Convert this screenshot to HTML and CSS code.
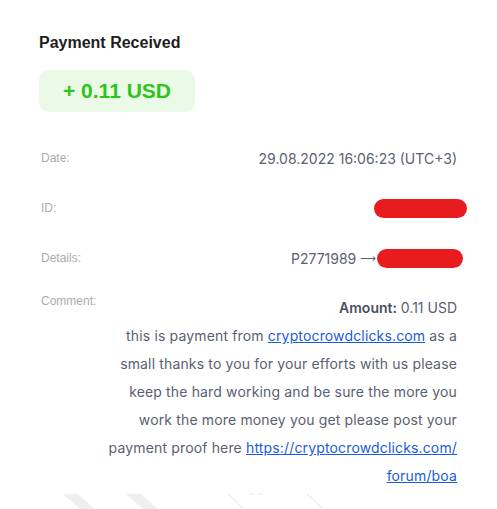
FILE: index.html
```html
<!DOCTYPE html>
<html>
<head>
<meta charset="utf-8">
<link rel="stylesheet" href="styles.css">
</head>
<body>
<div class="card">
  <h1 class="title">Payment Received</h1>
  <div class="badge">+ 0.11 USD</div>
  <div class="rows">
    <div class="row">
      <span class="label">Date:</span>
      <span class="value">29.08.2022 16:06:23 (UTC+3)</span>
    </div>
    <div class="row">
      <span class="label">ID:</span>
      <span class="value"><span class="redact redact-id"></span></span>
    </div>
    <div class="row">
      <span class="label">Details:</span>
      <span class="value">P2771989&nbsp;<span class="arrow">⟶</span><span class="redact redact-details"></span></span>
    </div>
    <div class="row row-comment">
      <span class="label">Comment:</span>
      <div class="comment">
        <div class="amount"><b>Amount:</b> 0.11 USD</div>
        <div class="message">this is payment from <a href="#">cryptocrowdclicks.com</a> as a<br>small thanks to you for your efforts with us please<br>keep the hard working and be sure the more you<br>work the more money you get please post your<br>payment proof here <a href="#">https://cryptocrowdclicks.com/<br>forum/boa</a></div>
      </div>
    </div>
  </div>
  <svg class="watermark" width="497" height="29" viewBox="0 0 497 29">
    <polygon points="63,14 78,14 95,29 80,29" fill="#efefef"/>
    <polygon points="126,14 141,14 158,29 143,29" fill="#efefef"/>
    <line x1="228" y1="14" x2="243" y2="28" stroke="#e2e2e2" stroke-width="1"/>
    <line x1="307" y1="14" x2="322" y2="28" stroke="#e2e2e2" stroke-width="1"/>
    <line x1="249" y1="14" x2="254" y2="14" stroke="#e6e6e6" stroke-width="1"/>
    <line x1="258" y1="14" x2="263" y2="14" stroke="#e6e6e6" stroke-width="1"/>
  </svg>
</div>
</body>
</html>
```

FILE: styles.css
```css
* { box-sizing: border-box; }
html, body { margin: 0; padding: 0; background: #fff; }
body { width: 497px; height: 509px; overflow: hidden; position: relative; }

.card {
  padding: 33px 40px 0 39px;
  font-family: "Liberation Sans", Arial, sans-serif;
}

.title {
  margin: 0;
  font-size: 16px;
  line-height: 20px;
  font-weight: bold;
  color: #1e1e1e;
}

.badge {
  margin-top: 17px;
  width: 156px;
  height: 42px;
  border-radius: 10px;
  background: #eafae6;
  color: #2ec41b;
  font-size: 21px;
  font-weight: bold;
  display: flex;
  align-items: center;
  justify-content: center;
}

.rows {
  margin-top: 21px;
  padding-left: 2px;
}

.row {
  height: 50px;
  display: flex;
  align-items: center;
  justify-content: space-between;
}

.label {
  font-size: 12px;
  line-height: 14px;
  color: #ababab;
}

.value {
  font-family: Inter, "Noto Sans", sans-serif;
  font-size: 14px;
  color: #5a6172;
  display: flex;
  align-items: center;
  white-space: nowrap;
}

.arrow {
  font-family: "DejaVu Sans", sans-serif;
  font-size: 11px;
}

.redact {
  display: inline-block;
  height: 19px;
  border-radius: 10px;
  background: #e81c1f;
}
.redact-id { width: 93px; margin-right: -10px; }
.redact-details { width: 86px; margin-left: 1px; margin-right: -6px; }

.row-comment {
  height: auto;
  margin-top: 11px;
  align-items: flex-start;
}

.comment {
  font-family: Inter, "Noto Sans", sans-serif;
  font-size: 14px;
  line-height: 28px;
  letter-spacing: 0.15px;
  color: #5a6172;
  text-align: right;
}
.amount { letter-spacing: 0; }
.amount b { color: #4a5061; font-weight: 600; }
.comment a { color: #1a5ce0; text-decoration: underline; }

.watermark {
  position: absolute;
  left: 0;
  top: 480px;
}
```
